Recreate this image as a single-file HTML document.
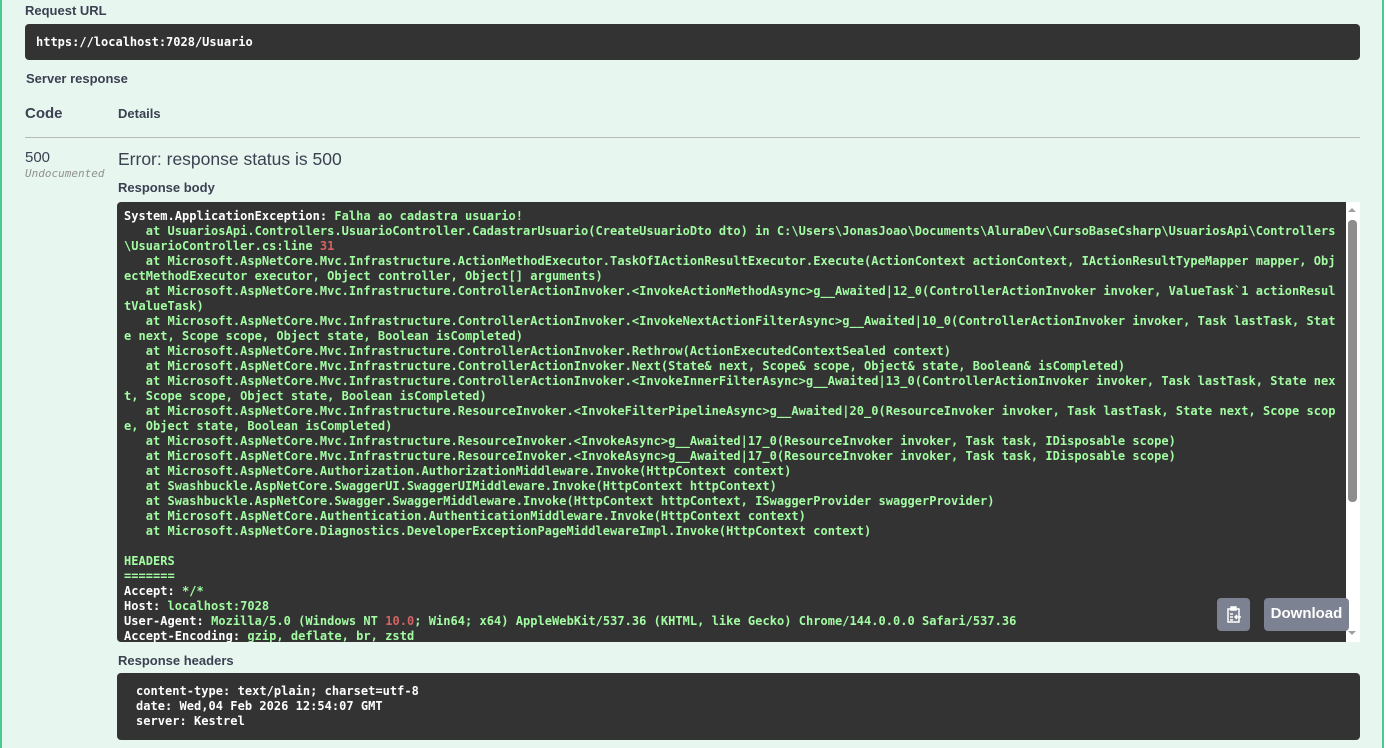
<!DOCTYPE html>
<html><head><meta charset="utf-8"><style>
html,body{margin:0;padding:0;}
body{width:1386px;height:748px;overflow:hidden;background:#fff;position:relative;font-family:"Liberation Sans",Arial,sans-serif;color:#3b4151;}
.bg{position:absolute;left:0;top:0;width:1384px;height:748px;background:#e8f6f0;border-left:2px solid #49cc90;border-right:2px solid #49cc90;box-sizing:border-box;}
.a{position:absolute;}
.lbl{font-size:13px;font-weight:bold;}
.mono{font-family:"DejaVu Sans Mono","Liberation Mono",monospace;font-weight:bold;font-size:12px;}
.dark{background:#333;border-radius:4px;}
pre{margin:0;font-family:"DejaVu Sans Mono","Liberation Mono",monospace;font-weight:bold;font-size:12px;line-height:15px;color:#fff;white-space:pre;letter-spacing:0.03px;}
.g{color:#a2fca2}.r{color:#d36363}
</style></head><body>
<div class="bg"></div>
<div class="a lbl" style="left:25px;top:3px;">Request URL</div>
<div class="a dark" style="left:25px;top:24px;width:1335px;height:36px;"></div>
<div class="a mono" style="left:36px;top:35px;color:#fff;font-size:12px;">https://localhost:7028/Usuario</div>
<div class="a lbl" style="left:26px;top:71px;">Server response</div>
<div class="a" style="left:25px;top:105px;font-size:15px;font-weight:bold;">Code</div>
<div class="a lbl" style="left:118px;top:106px;">Details</div>
<div class="a" style="left:25px;top:137px;width:1335px;height:1px;background:#b5bab8;"></div>
<div class="a" style="left:25px;top:149px;font-size:15px;">500</div>
<div class="a" style="left:25px;top:167px;font-size:11px;font-style:italic;color:#909090;font-family:'DejaVu Sans Mono','Liberation Mono',monospace;">Undocumented</div>
<div class="a" style="left:118px;top:149px;font-size:17.5px;">Error: response status is 500</div>
<div class="a lbl" style="left:118px;top:180px;">Response body</div>
<div class="a" style="left:117px;top:202px;width:1229px;height:440px;background:#333;border-radius:4px 0 0 4px;overflow:hidden;">
<pre style="padding:7px 0 0 7px;">System.ApplicationException: <span class="g">Falha ao cadastra usuario!</span>
<span class="g">   at UsuariosApi.Controllers.UsuarioController.CadastrarUsuario(CreateUsuarioDto dto) in C:\Users\JonasJoao\Documents\AluraDev\CursoBaseCsharp\UsuariosApi\Controllers</span>
<span class="g">\UsuarioController.cs:line </span><span class="r">31</span>
<span class="g">   at Microsoft.AspNetCore.Mvc.Infrastructure.ActionMethodExecutor.TaskOfIActionResultExecutor.Execute(ActionContext actionContext, IActionResultTypeMapper mapper, Obj</span>
<span class="g">ectMethodExecutor executor, Object controller, Object[] arguments)</span>
<span class="g">   at Microsoft.AspNetCore.Mvc.Infrastructure.ControllerActionInvoker.&lt;InvokeActionMethodAsync&gt;g__Awaited|12_0(ControllerActionInvoker invoker, ValueTask`1 actionResul</span>
<span class="g">tValueTask)</span>
<span class="g">   at Microsoft.AspNetCore.Mvc.Infrastructure.ControllerActionInvoker.&lt;InvokeNextActionFilterAsync&gt;g__Awaited|10_0(ControllerActionInvoker invoker, Task lastTask, Stat</span>
<span class="g">e next, Scope scope, Object state, Boolean isCompleted)</span>
<span class="g">   at Microsoft.AspNetCore.Mvc.Infrastructure.ControllerActionInvoker.Rethrow(ActionExecutedContextSealed context)</span>
<span class="g">   at Microsoft.AspNetCore.Mvc.Infrastructure.ControllerActionInvoker.Next(State&amp; next, Scope&amp; scope, Object&amp; state, Boolean&amp; isCompleted)</span>
<span class="g">   at Microsoft.AspNetCore.Mvc.Infrastructure.ControllerActionInvoker.&lt;InvokeInnerFilterAsync&gt;g__Awaited|13_0(ControllerActionInvoker invoker, Task lastTask, State nex</span>
<span class="g">t, Scope scope, Object state, Boolean isCompleted)</span>
<span class="g">   at Microsoft.AspNetCore.Mvc.Infrastructure.ResourceInvoker.&lt;InvokeFilterPipelineAsync&gt;g__Awaited|20_0(ResourceInvoker invoker, Task lastTask, State next, Scope scop</span>
<span class="g">e, Object state, Boolean isCompleted)</span>
<span class="g">   at Microsoft.AspNetCore.Mvc.Infrastructure.ResourceInvoker.&lt;InvokeAsync&gt;g__Awaited|17_0(ResourceInvoker invoker, Task task, IDisposable scope)</span>
<span class="g">   at Microsoft.AspNetCore.Mvc.Infrastructure.ResourceInvoker.&lt;InvokeAsync&gt;g__Awaited|17_0(ResourceInvoker invoker, Task task, IDisposable scope)</span>
<span class="g">   at Microsoft.AspNetCore.Authorization.AuthorizationMiddleware.Invoke(HttpContext context)</span>
<span class="g">   at Swashbuckle.AspNetCore.SwaggerUI.SwaggerUIMiddleware.Invoke(HttpContext httpContext)</span>
<span class="g">   at Swashbuckle.AspNetCore.Swagger.SwaggerMiddleware.Invoke(HttpContext httpContext, ISwaggerProvider swaggerProvider)</span>
<span class="g">   at Microsoft.AspNetCore.Authentication.AuthenticationMiddleware.Invoke(HttpContext context)</span>
<span class="g">   at Microsoft.AspNetCore.Diagnostics.DeveloperExceptionPageMiddlewareImpl.Invoke(HttpContext context)</span>

<span class="g">HEADERS</span>
<span class="g">=======</span>
Accept: <span class="g">*/*</span>
Host: <span class="g">localhost:7028</span>
User-Agent: <span class="g">Mozilla/5.0 (Windows NT </span><span class="r">10.0</span><span class="g">; Win64; x64) AppleWebKit/537.36 (KHTML, like Gecko) Chrome/144.0.0.0 Safari/537.36</span>
Accept-Encoding: <span class="g">gzip, deflate, br, zstd</span></pre>
</div>
<div class="a" style="left:1346px;top:202px;width:14px;height:440px;background:#fff;"></div>
<div class="a" style="left:1348px;top:220px;width:9px;height:282px;background:#8d8d8d;border-radius:4px;"></div>
<div class="a" style="left:1348px;top:208px;width:0;height:0;border-left:4px solid transparent;border-right:4px solid transparent;border-bottom:4px solid #a0a0a0;"></div>
<div class="a" style="left:1348px;top:631px;width:0;height:0;border-left:4px solid transparent;border-right:4px solid transparent;border-top:4px solid #a0a0a0;"></div>
<div class="a" style="left:1217px;top:598px;width:33px;height:33px;background:#7d8293;border-radius:4px;">
<svg width="33" height="33" viewBox="0 0 33 33"><g fill="none" stroke="#fff" stroke-width="1.5"><rect x="11" y="11" width="11" height="13"/><rect x="14" y="9" width="5" height="3" fill="#fff"/><path d="M13 16h3M13 19h3M13 22h3M24 19h-6M20 17l-2 2 2 2"/></g></svg>
</div>
<div class="a" style="left:1264px;top:598px;width:85px;height:33px;background:#7d8293;border-radius:4px;color:#fff;font-weight:bold;font-size:15px;line-height:31px;text-align:center;">Download</div>
<div class="a lbl" style="left:118px;top:653px;">Response headers</div>
<div class="a dark" style="left:117px;top:673px;width:1243px;height:67px;"></div>
<pre class="a" style="left:136px;top:684px;">content-type: text/plain; charset=utf-8
date: Wed,04 Feb 2026 12:54:07 GMT
server: Kestrel</pre>
</body></html>
